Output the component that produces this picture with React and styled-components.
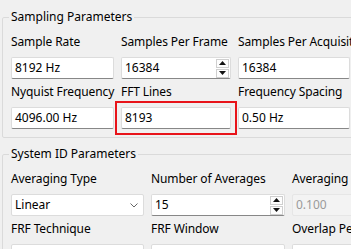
import styled, { createGlobalStyle } from "styled-components";

const Global = createGlobalStyle`
  html, body {
    margin: 0;
    background: #f0f0f0;
    overflow: hidden;
  }
  body {
    font-family: "Noto Sans", "Open Sans", sans-serif;
    font-size: 12px;
    color: #000;
  }
`;

const Page = styled.div`
  width: 420px;
  padding: 9px 0 0 2px;
  display: flex;
  flex-direction: column;
  gap: 8px;
`;

const Group = styled.fieldset`
  margin: 0;
  padding: 0 0 8px 8px;
  border: 1px solid #dadada;
  border-radius: 2px;
  min-width: 0;
`;

const Legend = styled.legend`
  padding: 0 2px;
  margin-left: -2px;
  line-height: 16px;
`;

const Grid = styled.div`
  margin-top: 9px;
  display: grid;
  grid-template-columns: ${(p) => p.$cols};
  column-gap: 7px;
  row-gap: 5px;
`;

const Cell = styled.div`
  display: flex;
  flex-direction: column;
  gap: 7px;
  min-width: 0;
`;

const Label = styled.div`
  line-height: 16px;
  white-space: nowrap;
  letter-spacing: -0.1px;
`;

const Highlight = styled.div`
  outline: 2px solid #e8141a;
  outline-offset: 4px;
`;

const Field = styled.div`
  box-sizing: border-box;
  height: 22px;
  display: flex;
  align-items: center;
  background: ${(p) => (p.$disabled ? "#f3f3f3" : "#fff")};
  border: 1px solid ${(p) => (p.$disabled ? "#e6e6e6" : "#dcdcdc")};
  border-bottom-color: ${(p) =>
    p.$disabled ? "#e6e6e6" : p.$flat ? "#dcdcdc" : "#878787"};
  border-radius: 2px;
  color: ${(p) => (p.$disabled ? "#9a9a9a" : "#000")};
  padding-left: 3px;
  white-space: nowrap;
  overflow: hidden;
`;

const Value = styled.span`
  flex: 1;
  line-height: 16px;
`;

const Spin = styled.div`
  display: flex;
  flex-direction: column;
  gap: 1px;
  margin-right: 1px;
`;

const SpinButton = styled.div`
  box-sizing: border-box;
  width: 13px;
  height: 9px;
  border: 1px solid #cfcfcf;
  background: #fdfdfd;
  display: flex;
  align-items: center;
  justify-content: center;
`;

const Arrow = ({ down }) => (
  <svg width="7" height="4" viewBox="0 0 7 4">
    <path d={down ? "M0 0h7L3.5 4z" : "M0 4h7L3.5 0z"} fill="#111" />
  </svg>
);

const Chevron = styled.svg`
  margin-right: 5px;
`;

const SpinBox = ({ value }) => (
  <Field>
    <Value>{value}</Value>
    <Spin>
      <SpinButton>
        <Arrow />
      </SpinButton>
      <SpinButton>
        <Arrow down />
      </SpinButton>
    </Spin>
  </Field>
);

const Combo = ({ value }) => (
  <Field $flat>
    <Value>{value}</Value>
    <Chevron width="8" height="5" viewBox="0 0 8 5">
      <path d="M0.5 0.5L4 4L7.5 0.5" fill="none" stroke="#666" strokeWidth="1" />
    </Chevron>
  </Field>
);

export default function App() {
  return (
    <Page>
      <Global />
      <Group>
        <Legend>Sampling Parameters</Legend>
        <Grid $cols="103px 110px 112px">
          <Cell>
            <Label>Sample Rate</Label>
            <Field>
              <Value>8192 Hz</Value>
            </Field>
          </Cell>
          <Cell>
            <Label>Samples Per Frame</Label>
            <SpinBox value="16384" />
          </Cell>
          <Cell>
            <Label>Samples Per Acquisition</Label>
            <Field>
              <Value>16384</Value>
            </Field>
          </Cell>
          <Cell>
            <Label>Nyquist Frequency</Label>
            <Field>
              <Value>4096.00 Hz</Value>
            </Field>
          </Cell>
          <Cell>
            <Label>FFT Lines</Label>
            <Highlight>
              <Field>
                <Value>8193</Value>
              </Field>
            </Highlight>
          </Cell>
          <Cell>
            <Label>Frequency Spacing</Label>
            <Field>
              <Value>0.50 Hz</Value>
            </Field>
          </Cell>
        </Grid>
      </Group>
      <Group>
        <Legend>System ID Parameters</Legend>
        <Grid $cols="133px 134px 133px">
          <Cell>
            <Label>Averaging Type</Label>
            <Combo value="Linear" />
          </Cell>
          <Cell>
            <Label>Number of Averages</Label>
            <SpinBox value="15" />
          </Cell>
          <Cell>
            <Label>Averaging Coefficient</Label>
            <Field $disabled>
              <Value>0.100</Value>
            </Field>
          </Cell>
          <Cell>
            <Label>FRF Technique</Label>
            <Combo value="" />
          </Cell>
          <Cell>
            <Label>FRF Window</Label>
            <Combo value="" />
          </Cell>
          <Cell>
            <Label>Overlap Percentage</Label>
            <Field>
              <Value />
            </Field>
          </Cell>
        </Grid>
      </Group>
    </Page>
  );
}
